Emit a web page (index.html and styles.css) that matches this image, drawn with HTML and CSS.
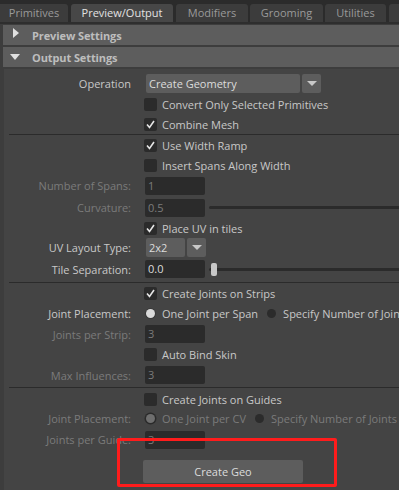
FILE: index.html
```html
<!DOCTYPE html>
<html>
<head>
<meta charset="utf-8">
<link rel="stylesheet" href="styles.css">
</head>
<body>
<div class="tabs">
  <div class="tab t1">Primitives</div>
  <div class="tab t2 active">Preview/Output</div>
  <div class="tab t3">Modifiers</div>
  <div class="tab t4">Grooming</div>
  <div class="tab t5">Utilities</div>
  <div class="tab t6"></div>
</div>
<div class="panel">
  <div class="fh"><span class="tri-right"></span>Preview Settings</div>
  <div class="fh"><span class="tri-down"></span>Output Settings</div>
  <div class="fbody">
    <div class="row r-op"><span class="lbl">Operation</span><div class="ctl"><div class="combo wide"><span class="combo-text">Create Geometry</span></div><div class="combo-arrow"></div></div></div>
    <div class="row r21"><span class="lbl"></span><div class="ctl"><span class="cb"></span><span class="txt">Convert Only Selected Primitives</span></div></div>
    <div class="row r18"><span class="lbl"></span><div class="ctl"><span class="cb on"><svg viewBox="0 0 13 13"><path d="M3 6.5 L5.5 9.5 L10 3" fill="none" stroke="#e6e6e6" stroke-width="1.6"/></svg></span><span class="txt">Combine Mesh</span></div></div>
    <div class="sep"></div>
    <div class="row r21"><span class="lbl"></span><div class="ctl"><span class="cb on"><svg viewBox="0 0 13 13"><path d="M3 6.5 L5.5 9.5 L10 3" fill="none" stroke="#e6e6e6" stroke-width="1.6"/></svg></span><span class="txt">Use Width Ramp</span></div></div>
    <div class="row r19"><span class="lbl"></span><div class="ctl"><span class="cb"></span><span class="txt">Insert Spans Along Width</span></div></div>
    <div class="row r21"><span class="lbl dim">Number of Spans:</span><div class="ctl"><span class="field dim">1</span></div></div>
    <div class="row r23"><span class="lbl dim">Curvature:</span><div class="ctl"><span class="field dim">0.5</span><span class="track"></span></div></div>
    <div class="row r19"><span class="lbl"></span><div class="ctl"><span class="cb on"><svg viewBox="0 0 13 13"><path d="M3 6.5 L5.5 9.5 L10 3" fill="none" stroke="#e6e6e6" stroke-width="1.6"/></svg></span><span class="txt">Place UV in tiles</span></div></div>
    <div class="row r19"><span class="lbl">UV Layout Type:</span><div class="ctl"><div class="combo small"><span class="combo-text">2x2</span></div><div class="combo-arrow"></div></div></div>
    <div class="row r24"><span class="lbl">Tile Separation:</span><div class="ctl"><span class="field">0.0</span><span class="track"><span class="handle"></span></span></div></div>
    <div class="sep"></div>
    <div class="row r20"><span class="lbl"></span><div class="ctl"><span class="cb on"><svg viewBox="0 0 13 13"><path d="M3 6.5 L5.5 9.5 L10 3" fill="none" stroke="#e6e6e6" stroke-width="1.6"/></svg></span><span class="txt">Create Joints on Strips</span></div></div>
    <div class="row r20"><span class="lbl">Joint Placement:</span><div class="ctl"><span class="radio sel"></span><span class="rtxt rgap">One Joint per Span</span><span class="radio"></span><span class="rtxt">Specify Number of Joints</span></div></div>
    <div class="row r22"><span class="lbl dim">Joints per Strip:</span><div class="ctl"><span class="field dim">3</span></div></div>
    <div class="row r19"><span class="lbl"></span><div class="ctl"><span class="cb"></span><span class="txt">Auto Bind Skin</span></div></div>
    <div class="row r22"><span class="lbl dim">Max Influences:</span><div class="ctl"><span class="field dim">3</span></div></div>
    <div class="sep"></div>
    <div class="row r22"><span class="lbl"></span><div class="ctl"><span class="cb"></span><span class="txt">Create Joints on Guides</span></div></div>
    <div class="row r17"><span class="lbl dim">Joint Placement:</span><div class="ctl"><span class="radio sel dimsel"></span><span class="rtxt dim rgap">One Joint per CV</span><span class="radio"></span><span class="rtxt dim">Specify Number of Joints</span></div></div>
    <div class="row r25"><span class="lbl dim">Joints per Guide:</span><div class="ctl"><span class="field dim">3</span></div></div>
    <div class="btn-row"><button class="btn">Create Geo</button></div>
  </div>
</div>
<div class="mark"></div>
</body>
</html>
```
FILE: styles.css
```css
html, body {
  margin: 0;
  padding: 0;
  width: 399px;
  height: 490px;
  overflow: hidden;
  background: #444444;
  font-family: "Open Sans", "Noto Sans", sans-serif;
  font-size: 11px;
  color: #c8c8c8;
}
.tabs {
  height: 22px;
  background: #2b2b2b;
  display: flex;
  align-items: flex-end;
  border-bottom: 2px solid #2e2e2e;
  white-space: nowrap;
}
.tab {
  height: 18px;
  line-height: 18px;
  text-align: center;
  background: #3c3c3c;
  color: #9a9a9a;
  border-radius: 3px 3px 0 0;
  flex: none;
}
.t1 { width: 68px; border-top-left-radius: 0; }
.t2 { width: 102px; margin-left: 3px; }
.t3 { width: 72px; margin-left: 3px; }
.t4 { width: 73px; margin-left: 2px; }
.t5 { width: 61px; margin-left: 2px; }
.t6 { width: 20px; margin-left: 3px; }
.tab.active {
  background: #474747;
  color: #e2e2e2;
}
.panel {
  background: #3d3d3d;
  padding-left: 3px;
  padding-top: 1px;
  height: 466px;
}
.fh {
  height: 20px;
  background: #5d5d5d;
  margin-bottom: 2px;
  display: flex;
  align-items: center;
  font-weight: bold;
  color: #bdbdbd;
  position: relative;
  padding-left: 29px;
  letter-spacing: -0.1px;
}
.tri-right {
  position: absolute;
  left: 10px;
  top: 3px;
  width: 0; height: 0;
  border-top: 5px solid transparent;
  border-bottom: 5px solid transparent;
  border-left: 6px solid #e0e0e0;
}
.tri-down {
  position: absolute;
  left: 7px;
  top: 7px;
  width: 0; height: 0;
  border-left: 5.5px solid transparent;
  border-right: 5.5px solid transparent;
  border-top: 6px solid #e0e0e0;
}
.fbody {
  background: #444444;
  margin-left: 1px;
  padding-top: 4px;
  height: 420px;
}
.row {
  display: grid;
  grid-template-columns: 127px 1fr;
  column-gap: 13px;
  align-items: center;
  white-space: nowrap;
}
.r-op { height: 21px; }
.r17 { height: 17px; }
.r18 { height: 18px; }
.r19 { height: 19px; }
.r20 { height: 20px; }
.r21 { height: 21px; }
.r22 { height: 22px; }
.r23 { height: 23px; }
.r24 { height: 24px; }
.r25 { height: 25px; }
.lbl {
  text-align: right;
  color: #c8c8c8;
}
.dim { color: #7b7b7b; }
.ctl {
  display: flex;
  align-items: center;
  min-width: 0;
  height: 100%;
}
.txt { margin-left: 5px; }
.cb {
  width: 13px;
  height: 13px;
  background: #2b2b2b;
  border-radius: 2px;
  flex: none;
  display: block;
}
.cb svg { display: block; width: 13px; height: 13px; }
.combo {
  margin-left: 2px;
  height: 19px;
  background: #5d5d5d;
  border-radius: 2px;
  display: flex;
  align-items: center;
  padding-left: 3px;
  color: #dcdcdc;
  box-sizing: border-box;
}
.combo.wide { width: 154px; }
.combo.small { width: 39px; }
.combo-arrow {
  margin-left: 2px;
  width: 19px;
  height: 19px;
  background: #5d5d5d;
  border-radius: 2px;
  position: relative;
  flex: none;
}
.combo-arrow::after {
  content: "";
  position: absolute;
  left: 5px;
  top: 7px;
  border-left: 5px solid transparent;
  border-right: 5px solid transparent;
  border-top: 5px solid #c8c8c8;
}
.field {
  margin-left: 1px;
  width: 60px;
  height: 18px;
  box-sizing: border-box;
  background: #2b2b2b;
  border-radius: 2px;
  padding-left: 3px;
  line-height: 18px;
  color: #dcdcdc;
  flex: none;
}
.field.dim { color: #7b7b7b; }
.track {
  margin-left: 4px;
  flex: none;
  width: 200px;
  height: 3px;
  background: #2b2b2b;
  border-radius: 2px;
  position: relative;
}
.handle {
  position: absolute;
  left: 2px;
  top: -5px;
  width: 6px;
  height: 13px;
  border-radius: 2px;
  background: #c8c8c8;
}
.radio {
  width: 9px;
  height: 9px;
  border-radius: 50%;
  background: #2b2b2b;
  flex: none;
  margin-left: 2px;
}
.radio.sel {
  background: #dadada;
  box-shadow: 0 0 0 1px #3a3a3a;
}
.radio.dimsel {
  background: #6e6e6e;
  box-shadow: 0 0 0 1.5px #2b2b2b;
}
.rtxt { margin-left: 7px; }
.rgap { margin-right: 7px; }
.sep {
  height: 1px;
  background: #2b2b2b;
  margin: 1px 0 0 5px;
}
.btn-row {
  padding-left: 139px;
  margin-top: 8px;
}
.btn {
  width: 160px;
  height: 23px;
  background: #5d5d5d;
  border: none;
  border-radius: 2px;
  color: #dcdcdc;
  font-family: "Open Sans", "Noto Sans", sans-serif;
  font-size: 11px;
  padding: 0;
}
.mark {
  position: absolute;
  left: 117px;
  top: 438px;
  width: 220px;
  height: 49px;
  box-sizing: border-box;
  border: 3.5px solid #ff1c1c;
  border-radius: 2px;
}
```
